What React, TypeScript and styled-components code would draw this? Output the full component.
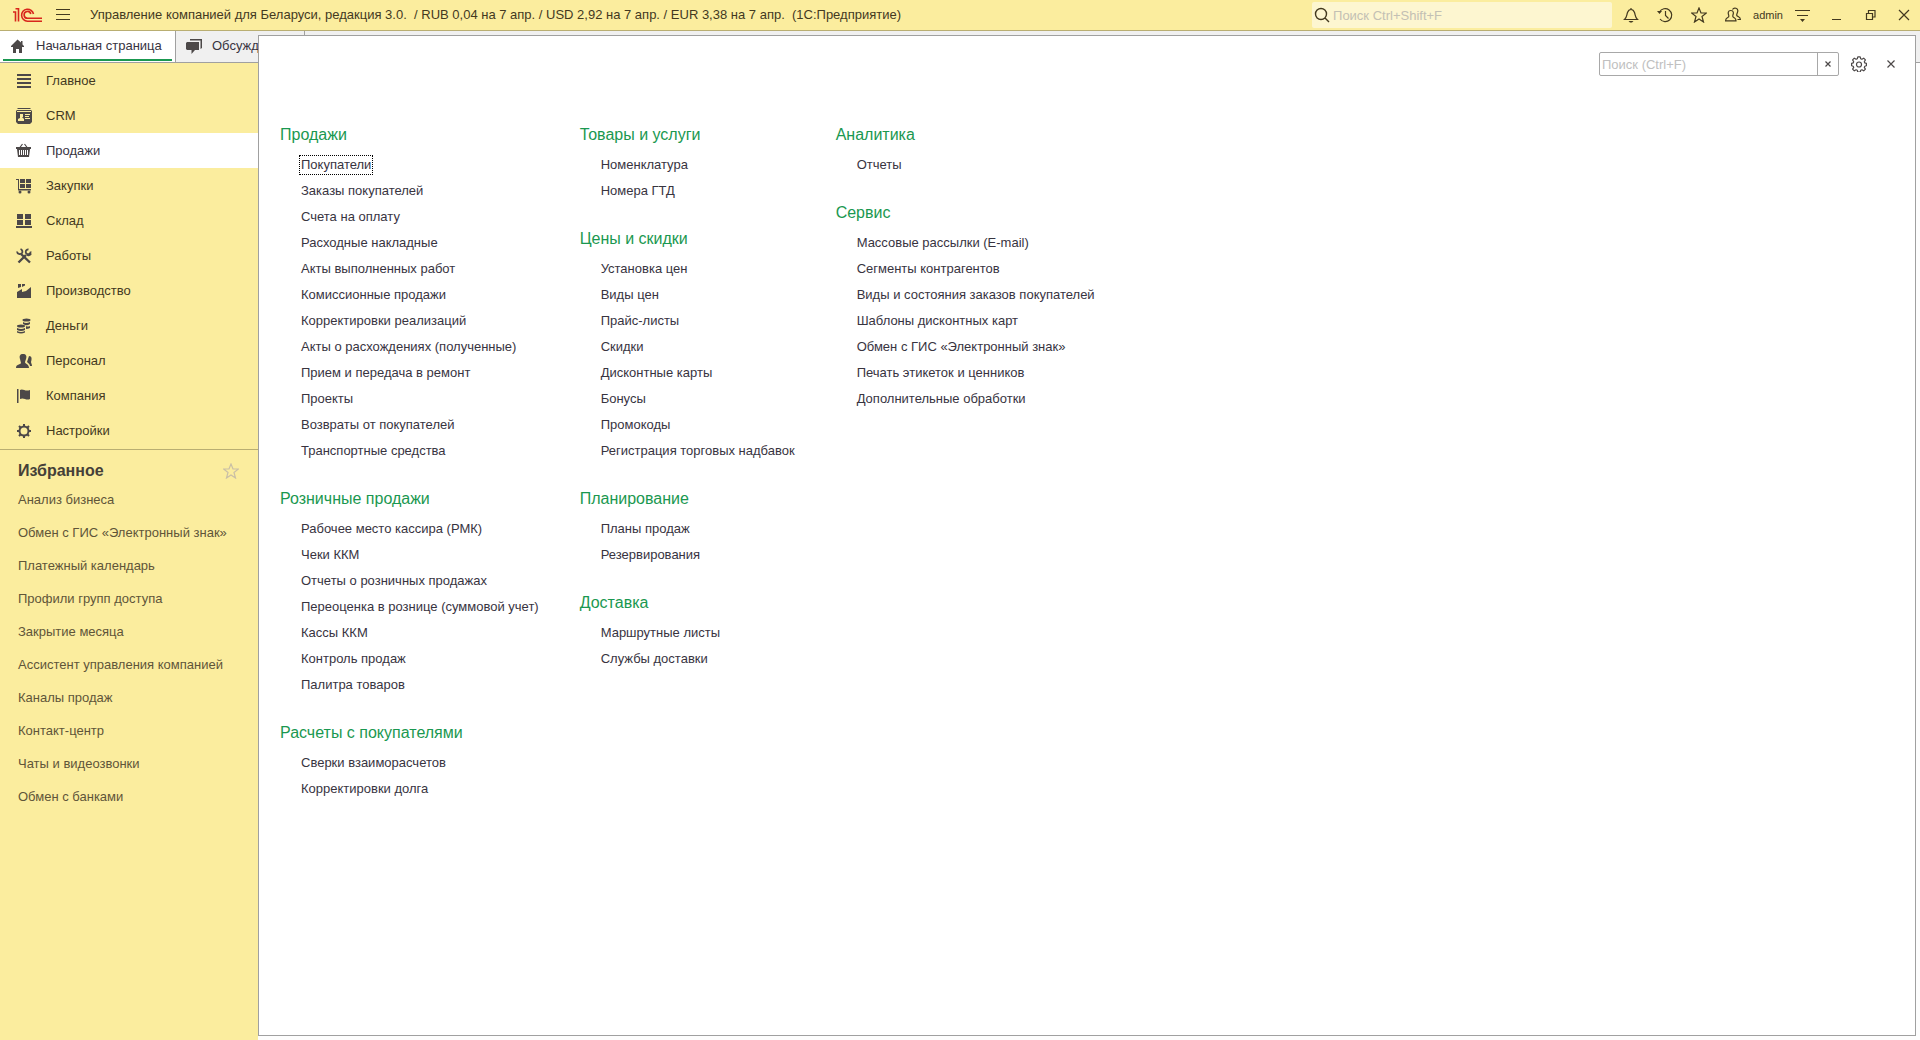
import React from "react";
import styled, { createGlobalStyle, css } from "styled-components";

const GlobalStyle = createGlobalStyle`
  *, *::before, *::after { box-sizing: border-box; }
  html, body, #root { height: 100%; }
  body {
    margin: 0;
    font-family: "Liberation Sans", Arial, sans-serif;
    font-size: 13px;
    line-height: 16px;
    color: #38343f;
    background: #fdfdfd;
  }
  button, input { font: inherit; color: inherit; }
  h2, ul { margin: 0; padding: 0; font-weight: normal; }
  ul { list-style: none; }
  a { color: inherit; text-decoration: none; }
  svg { display: block; flex: none; }
`;

const Window = styled.div`
  display: flex;
  flex-direction: column;
  min-height: 100%;
`;

const TitleBar = styled.header`
  display: flex;
  align-items: center;
  height: 31px;
  padding-left: 12px;
  background: #fbed9e;
  border-bottom: 1px solid #b9ae72;
  color: #43391f;
`;

const IconButton = styled.button<{ $width: number; $muted?: boolean }>`
  display: flex;
  align-items: center;
  justify-content: center;
  width: ${(p) => p.$width}px;
  height: 28px;
  padding: 0;
  border: 0;
  background: none;
  ${(p) => p.$muted && css`color: #c9bfa6;`}
`;

const AppTitle = styled.div`
  flex: 1;
  padding-left: 6px;
  white-space: pre;
  overflow: hidden;
`;

const GlobalSearch = styled.label`
  display: flex;
  align-items: center;
  gap: 3px;
  width: 300px;
  height: 26px;
  padding-left: 2px;
  margin-right: 2px;
  border-radius: 2px;
  background: #fdf6d0;
`;

const SearchInput = styled.input`
  flex: 1;
  min-width: 0;
  height: 100%;
  padding: 0;
  border: 0;
  outline: none;
  background: transparent;
  &::placeholder { color: #c3c0b4; opacity: 1; }
`;

const UserButton = styled.button`
  padding: 0 3px;
  border: 0;
  background: none;
  font-size: 11px;
`;

const TabBar = styled.nav`
  display: flex;
  height: 32px;
  background: #f0f0f0;
  border-bottom: 1px solid #a0a0a0;
`;

const Tab = styled.button<{ $active?: boolean; $width: number }>`
  display: flex;
  width: ${(p) => p.$width}px;
  padding: 0 3px;
  border: 0;
  border-right: 1px solid #a0a0a0;
  background: ${(p) => (p.$active ? "#fff" : "#f0f0f0")};
  svg { color: #4c4848; }
`;

const TabLabel = styled.span<{ $active?: boolean }>`
  display: flex;
  align-items: center;
  align-self: stretch;
  gap: 10px;
  flex: 1;
  padding: 2px 7px 0;
  margin-bottom: 1px;
  white-space: nowrap;
  border-bottom: 2px solid ${(p) => (p.$active ? "#1a9850" : "transparent")};
`;

const Body = styled.div`
  display: flex;
  flex: 1;
`;

const Sidebar = styled.aside`
  width: 258px;
  flex: none;
  background: #fbed9e;
  color: #43391f;
`;

const Sections = styled.ul`
  padding-bottom: 1px;
  border-bottom: 1px solid #b9ae72;
`;

const SectionLink = styled.a<{ $active?: boolean }>`
  display: flex;
  align-items: center;
  gap: 14px;
  height: 35px;
  padding-left: 16px;
  ${(p) => p.$active && css`background: #fff; color: #38343f;`}
  svg { color: #4c4848; }
`;

const FavoritesHead = styled.div`
  display: flex;
  align-items: center;
  justify-content: space-between;
  height: 25px;
  margin-top: 8px;
  padding: 0 19px 0 18px;
  color: #454038;
`;

const FavoritesTitle = styled.h2`
  font-size: 16px;
  font-weight: bold;
`;

const FavoriteLink = styled.a`
  display: flex;
  align-items: center;
  height: 33px;
  padding-left: 18px;
  color: #5f5539;
  white-space: nowrap;
`;

const Panel = styled.main`
  flex: 1;
  min-width: 0;
  position: relative;
  z-index: 1;
  margin: -28px 4px 4px 0;
  border: 1px solid #a0a0a0;
  background: #fff;
`;

const PanelTools = styled.div`
  display: flex;
  justify-content: flex-end;
  align-items: center;
  height: 56px;
  padding-right: 8px;
  color: #4c4848;
`;

const PanelSearch = styled.div`
  display: flex;
  width: 240px;
  height: 24px;
  margin-right: 4px;
  border: 1px solid #a8a8a8;
  border-radius: 2px;
  input { padding-left: 2px; }
  input::placeholder { color: #c0c0c0; }
  button { height: 100%; border-left: 1px solid #a8a8a8; }
`;

const Columns = styled.div`
  display: flex;
  align-items: flex-start;
  gap: 39px;
  padding: 28px 21px;
`;

const Column = styled.div`
  display: flex;
  flex-direction: column;
  gap: 20px;
`;

const GroupTitle = styled.h2`
  margin-bottom: 2px;
  font-size: 16px;
  line-height: 30px;
  color: #1a9850;
`;

const Command = styled.li`
  display: flex;
  align-items: center;
  height: 26px;
  padding-left: 19px;
`;

const CommandLink = styled.a<{ $focused?: boolean }>`
  padding: 1px;
  white-space: nowrap;
  border: 1px dotted ${(p) => (p.$focused ? "#000" : "transparent")};
`;

const stroke = { fill: "none", stroke: "currentColor", strokeWidth: 1.2 } as const;

const icons: Record<string, React.ReactNode> = {
  main: <path d="M1 1h14v2H1zM1 5h14v2H1zM1 9h14v2H1zM1 13h14v2H1z" />,
  crm: (
    <>
      <path d="M2 0h12l1 1H1zM1 2h14l1 1v11l-2 2H2l-2-2V3z" />
      <path fill="#fbed9e" d="M1 3h14v1H1zM4 6h3v3H6l2 2v2H2v-2l2-1zM9 6h5v1H9zM9 8h4v1H9zM9 10h5v1H9z" />
    </>
  ),
  sales: (
    <>
      <path {...stroke} d="M3.500 5l3-4M11.500 5l-3-4" />
      <path d="M0 4h15v2h-1l-1 8H2L1 6H0z" />
      <path stroke="#fff" d="M3.500 7v5M5.500 7v5M7.500 7v5M9.500 7v5M11.500 7v5" />
    </>
  ),
  purchases: (
    <>
      <path d="M0 1h3v10h12v1.500H2V2H0zM4 1h5v4H4zM10 1h5v4h-5zM4 6h5v4H4zM10 6h5v4h-5z" />
      <circle cx="4" cy="14" r="1.500" />
      <circle cx="13" cy="14" r="1.500" />
    </>
  ),
  warehouse: <path d="M1 1h6v5H1zM9 1h6v5H9zM1 7h6v5H1zM9 7h6v5H9zM0 13h16v2H0z" />,
  works: (
    <>
      <path fill="none" stroke="currentColor" strokeWidth="2.400" d="M5 6l9 8.500M2.500 14.500L10 7" />
      <path
        fill="none"
        stroke="currentColor"
        strokeWidth="1.800"
        d="M1 3.500a2.800 2.800 0 0 0 5 1.500 2.800 2.800 0 0 0-1.500-4M14.500 3.500a2.400 2.400 0 1 1-2-2M15 5.500a2.400 2.400 0 0 1-4 1"
      />
    </>
  ),
  production: <path d="M1 15V9l5-3v3l4-1 5-4v11zM2 1h3v3L2 5zM6 1h3v1.500L6 4z" />,
  money: (
    <>
      <ellipse cx="10.500" cy="2" rx="4" ry="1.500" />
      <path d="M7 4q3 2 7 0v2q-3 2-5 1l-2-1zM10 8q2 1 4 0v2q-2 1-4 1z" />
      <ellipse cx="5" cy="8" rx="4" ry="1.500" />
      <path d="M1 10q4 2 8 0v2q-4 2-8 0zM1 13q4 2 8 0v1.500q-4 2-8 0z" />
    </>
  ),
  staff: (
    <>
      <path d="M7 1c3 0 4 2 3 5l-1 3c0 2 4 2 4 6H0c0-4 4-3 5-5L4 6c-1-3 0-5 3-5z" />
      <path d="M13 3c3 0 3 3 2 6 0 1 1 2 1 4h-2c0-2-2-3-3-4l1-3z" />
    </>
  ),
  company: <path d="M1 1h1.500v14H1zM4 2c3-2 5 2 10 0v9c-4 2-6-2-10 0z" />,
  settings: (
    <>
      <circle cx="8" cy="8" r="4.500" fill="none" stroke="currentColor" strokeWidth="2" />
      <path stroke="currentColor" strokeWidth="2" d="M8 1v2M8 13v2M1 8h2M13 8h2M3 3l2 2M11 11l2 2M13 3l-2 2M5 11l-2 2" />
    </>
  ),
  home: <path d="M7.500 1.500L1 8v1h2v6h3v-4h3v4h3V9h2V8l-1.500-1.500V3H11v1.500z" />,
  chat: <path d="M4 1h12v9l-1.500 1V2.500H4zM1 4h12v8H9l-3.500 4v-4H1L0 11V5z" />,
  bell: (
    <>
      <path {...stroke} d="M8 1v1.500M1.500 12.500h13c-2.500-2-2-4-3-7-.7-2-1.500-3-3.500-3s-2.800 1-3.500 3c-1 3-.5 5-3 7z" />
      <path d="M5.500 14h5L9 15.500H7z" />
    </>
  ),
  history: (
    <>
      <path {...stroke} d="M2.500 5A6.500 6.500 0 1 1 3 12M8.500 4v4.500l3 3" />
      <path d="M0 4h5L2.500 7z" />
    </>
  ),
  star: <path {...stroke} d="M8 1l2 5h5.500L11 9.500l1.500 5.500L8 12l-4.500 3L5 9.500.5 6H6z" />,
  people: (
    <>
      <path {...stroke} d="M5.800 3.500c3 0 3 2.500 2 5-.5 1.500.2 1.700 1.500 2.300 1.200.6 1.700 1.500 1.700 3H.6c0-1.500.5-2.400 1.700-3 1.300-.6 2-.8 1.500-2.300-1-2.500-1-5 2-5z" />
      <path {...stroke} d="M7.500 2.500C9 0 13.500 1 12.700 4.500c-.4 2-1.400 3-.9 4 .5 1.200 3.600 1.200 3.600 4H12.500" />
    </>
  ),
  more: <path d="M0 3h15v1H0zM2 8h11v1H2zM5 12h5l-2.500 3z" />,
  minimize: <path d="M3 12h9v1H3z" />,
  restore: <path {...stroke} d="M3.500 6.500h6v6h-6zM5.500 6v-2.500h6.500v6.500h-2" />,
  close: <path {...stroke} d="M3 3l10 10M13 3L3 13" />,
  closeSmall: <path {...stroke} d="M5.500 5.500l5 5M10.500 5.500l-5 5" />,
  closePanel: <path {...stroke} d="M4.500 4.500l7 7M11.500 4.500l-7 7" />,
  burger: <path d="M1 2h14v1H1zM1 7h14v1H1zM1 12h14v1H1z" />,
  search: <path fill="none" stroke="currentColor" strokeWidth="1.400" d="M11 11l4 4M12.500 7a5.500 5.500 0 1 1-11 0 5.500 5.500 0 0 1 11 0z" />,
  gear: (
    <>
      <path
        {...stroke}
        strokeLinejoin="round"
        d="M6.800.8h2.400l.5 2 1.200.5 1.800-1.100 1.700 1.700-1.100 1.800.5 1.200 1.600.4v2.400l-1.600.5-.5 1.200 1.100 1.700-1.700 1.700-1.800-1-1.200.5-.5 1.900H6.800l-.5-1.900-1.200-.5-1.800 1-1.700-1.700 1.100-1.700-.5-1.200-1.600-.5V7.300l1.600-.4.5-1.200-1.100-1.800 1.700-1.700 1.800 1.100 1.200-.5z"
      />
      <circle {...stroke} cx="8" cy="8.500" r="2.500" />
    </>
  ),
};

function Icon({ name, size = 16 }: { name: string; size?: number }) {
  return (
    <svg width={size} height={size} viewBox="0 0 16 16" fill="currentColor" aria-hidden="true">
      {icons[name]}
    </svg>
  );
}

function Logo() {
  return (
    <svg width="30" height="16" viewBox="0 0 30 16" fill="none" stroke="#d8261c" strokeWidth="1.600" aria-hidden="true">
      <path d="M1 5h2.500v9.500M3.500 1.800H6.500v12.700" />
      <path d="M21.500 7a6 6 0 1 0-6 7.200H30M18.800 7a3.400 3.400 0 1 0-3.300 4.200H30" />
    </svg>
  );
}

const sections: [string, string][] = [
  ["main", "Главное"],
  ["crm", "CRM"],
  ["sales", "Продажи"],
  ["purchases", "Закупки"],
  ["warehouse", "Склад"],
  ["works", "Работы"],
  ["production", "Производство"],
  ["money", "Деньги"],
  ["staff", "Персонал"],
  ["company", "Компания"],
  ["settings", "Настройки"],
];

const favorites = [
  "Анализ бизнеса",
  "Обмен с ГИС «Электронный знак»",
  "Платежный календарь",
  "Профили групп доступа",
  "Закрытие месяца",
  "Ассистент управления компанией",
  "Каналы продаж",
  "Контакт-центр",
  "Чаты и видеозвонки",
  "Обмен с банками",
];

type Group = { title: string; items: string[] };

const columns: Group[][] = [
  [
    {
      title: "Продажи",
      items: [
        "Покупатели",
        "Заказы покупателей",
        "Счета на оплату",
        "Расходные накладные",
        "Акты выполненных работ",
        "Комиссионные продажи",
        "Корректировки реализаций",
        "Акты о расхождениях (полученные)",
        "Прием и передача в ремонт",
        "Проекты",
        "Возвраты от покупателей",
        "Транспортные средства",
      ],
    },
    {
      title: "Розничные продажи",
      items: [
        "Рабочее место кассира (РМК)",
        "Чеки ККМ",
        "Отчеты о розничных продажах",
        "Переоценка в рознице (суммовой учет)",
        "Кассы ККМ",
        "Контроль продаж",
        "Палитра товаров",
      ],
    },
    { title: "Расчеты с покупателями", items: ["Сверки взаиморасчетов", "Корректировки долга"] },
  ],
  [
    { title: "Товары и услуги", items: ["Номенклатура", "Номера ГТД"] },
    {
      title: "Цены и скидки",
      items: [
        "Установка цен",
        "Виды цен",
        "Прайс-листы",
        "Скидки",
        "Дисконтные карты",
        "Бонусы",
        "Промокоды",
        "Регистрация торговых надбавок",
      ],
    },
    { title: "Планирование", items: ["Планы продаж", "Резервирования"] },
    { title: "Доставка", items: ["Маршрутные листы", "Службы доставки"] },
  ],
  [
    { title: "Аналитика", items: ["Отчеты"] },
    {
      title: "Сервис",
      items: [
        "Массовые рассылки (E-mail)",
        "Сегменты контрагентов",
        "Виды и состояния заказов покупателей",
        "Шаблоны дисконтных карт",
        "Обмен с ГИС «Электронный знак»",
        "Печать этикеток и ценников",
        "Дополнительные обработки",
      ],
    },
  ],
];

export default function App() {
  return (
    <Window>
      <GlobalStyle />
      <TitleBar>
        <Logo />
        <IconButton $width={42} aria-label="Меню"><Icon name="burger" /></IconButton>
        <AppTitle>
          {"Управление компанией для Беларуси, редакция 3.0.  / RUB 0,04 на 7 апр. / USD 2,92 на 7 апр. / EUR 3,38 на 7 апр.  (1С:Предприятие)"}
        </AppTitle>
        <GlobalSearch>
          <Icon name="search" />
          <SearchInput type="text" placeholder="Поиск Ctrl+Shift+F" aria-label="Поиск" />
        </GlobalSearch>
        <IconButton $width={34} aria-label="Оповещения"><Icon name="bell" /></IconButton>
        <IconButton $width={34} aria-label="История"><Icon name="history" /></IconButton>
        <IconButton $width={34} aria-label="Избранное"><Icon name="star" /></IconButton>
        <IconButton $width={34} aria-label="Пользователи"><Icon name="people" /></IconButton>
        <UserButton>admin</UserButton>
        <IconButton $width={34} aria-label="Сервис"><Icon name="more" /></IconButton>
        <IconButton $width={34} aria-label="Свернуть"><Icon name="minimize" /></IconButton>
        <IconButton $width={34} aria-label="Восстановить"><Icon name="restore" /></IconButton>
        <IconButton $width={32} aria-label="Закрыть"><Icon name="close" /></IconButton>
      </TitleBar>
      <TabBar>
        <Tab $active $width={176}>
          <TabLabel $active><Icon name="home" />Начальная страница</TabLabel>
        </Tab>
        <Tab $width={129}>
          <TabLabel><Icon name="chat" />Обсуждения</TabLabel>
        </Tab>
      </TabBar>
      <Body>
        <Sidebar>
          <Sections>
            {sections.map(([icon, label]) => (
              <li key={label}>
                <SectionLink href="#" $active={icon === "sales"}><Icon name={icon} />{label}</SectionLink>
              </li>
            ))}
          </Sections>
          <FavoritesHead>
            <FavoritesTitle>Избранное</FavoritesTitle>
            <IconButton $width={16} $muted aria-label="Настроить избранное"><Icon name="star" /></IconButton>
          </FavoritesHead>
          <ul>
            {favorites.map((label) => (
              <li key={label}><FavoriteLink href="#">{label}</FavoriteLink></li>
            ))}
          </ul>
        </Sidebar>
        <Panel>
          <PanelTools>
            <PanelSearch>
              <SearchInput type="text" placeholder="Поиск (Ctrl+F)" aria-label="Поиск по командам" />
              <IconButton $width={21} aria-label="Очистить"><Icon name="closeSmall" /></IconButton>
            </PanelSearch>
            <IconButton $width={32} aria-label="Настройка"><Icon name="gear" /></IconButton>
            <IconButton $width={32} aria-label="Закрыть панель"><Icon name="closePanel" /></IconButton>
          </PanelTools>
          <Columns>
            {columns.map((groups) => (
              <Column key={groups[0].title}>
                {groups.map((group) => (
                  <section key={group.title}>
                    <GroupTitle>{group.title}</GroupTitle>
                    <ul>
                      {group.items.map((item) => (
                        <Command key={item}>
                          <CommandLink href="#" $focused={item === "Покупатели"}>{item}</CommandLink>
                        </Command>
                      ))}
                    </ul>
                  </section>
                ))}
              </Column>
            ))}
          </Columns>
        </Panel>
      </Body>
    </Window>
  );
}
